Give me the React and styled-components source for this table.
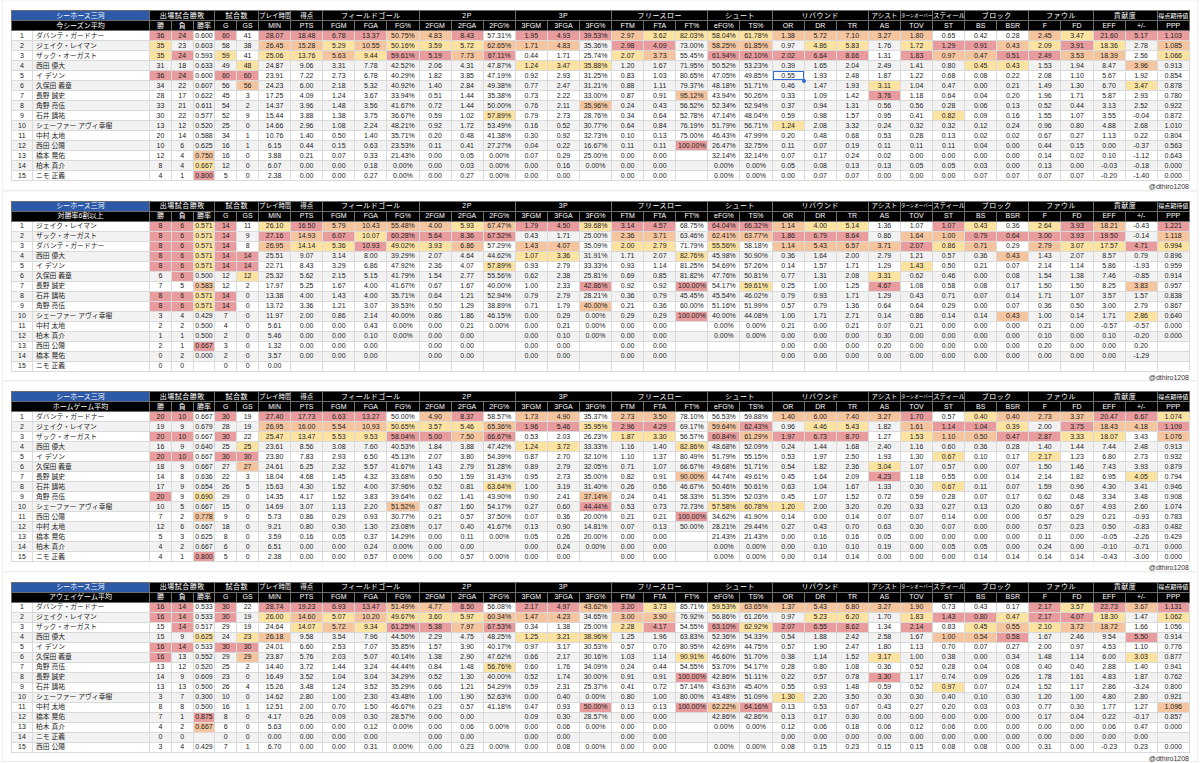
import styled, { createGlobalStyle } from "styled-components";

const GlobalStyle = createGlobalStyle`
  html, body {
    margin: 0;
    padding: 0;
    background: #ffffff;
  }
  body {
    font-family: "Liberation Sans", "Noto Sans CJK JP", sans-serif;
    color: #222;
  }
`;

const GROUPS = [
  ["出場試合勝敗", 3],
  ["試合数", 2],
  ["プレイ時間", 1],
  ["得点", 1],
  ["フィールドゴール", 3],
  ["2P", 3],
  ["3P", 3],
  ["フリースロー", 3],
  ["シュート", 2],
  ["リバウンド", 3],
  ["アシスト", 1],
  ["ターンオーバー", 1, "tiny"],
  ["スティール", 1],
  ["ブロック", 2],
  ["ファウル", 2],
  ["貢献度", 2],
  ["得点期待値", 1, "small"],
];

const COLS = ["勝", "負", "勝率", "G", "GS", "MIN", "PTS", "FGM", "FGA", "FG%", "2FGM", "2FGA", "2FG%", "3FGM", "3FGA", "3FG%", "FTM", "FTA", "FT%", "eFG%", "TS%", "OR", "DR", "TR", "AS", "TOV", "ST", "BS", "BSR", "F", "FD", "EFF", "+/-", "PPP"];

const HEAT = { r: "#e89c9d", o: "#f5c59f", y: "#fce3a2" };

const EMPTY28 = Array(28).fill("-").join(" ");

const TABLES = [
  {
    title: "今シーズン平均",
    selected: [4, 21],
    fix: { "3-28": "y" },
    rows: [
      ["ダバンテ・ガードナー", "36 24 0.600 60 41 28.07 18.48 6.78 13.37 50.75% 4.83 8.43 57.31% 1.95 4.93 39.53% 2.97 3.62 82.03% 58.04% 61.78% 1.38 5.72 7.10 3.27 1.80 0.65 0.42 0.28 2.45 3.47 21.60 5.17 1.103"],
      ["ジェイク・レイマン", "35 23 0.603 58 38 26.45 15.28 5.29 10.55 50.16% 3.59 5.72 62.65% 1.71 4.83 35.36% 2.98 4.09 73.00% 58.25% 61.85% 0.97 4.86 5.83 1.76 1.72 1.29 0.91 0.43 2.09 3.91 18.36 2.78 1.085"],
      ["ザック・オーガスト", "35 24 0.593 59 41 25.06 13.76 5.63 9.44 59.61% 5.19 7.73 67.11% 0.44 1.71 25.74% 2.07 3.73 55.45% 61.94% 62.10% 2.02 6.64 8.66 1.31 1.83 0.97 0.47 0.51 2.49 3.53 18.39 2.56 1.066"],
      ["西田 優大", "31 18 0.633 49 48 24.87 9.06 3.31 7.78 42.52% 2.06 4.31 47.87% 1.24 3.47 35.88% 1.20 1.67 71.95% 50.52% 53.23% 0.39 1.65 2.04 2.49 1.41 0.80 0.45 0.43 1.53 1.94 8.47 3.96 0.913"],
      ["イ デソン", "36 24 0.600 60 60 23.91 7.22 2.73 6.78 40.29% 1.82 3.85 47.19% 0.92 2.93 31.25% 0.83 1.03 80.65% 47.05% 49.85% 0.55 1.93 2.48 1.87 1.22 0.68 0.08 0.22 2.08 1.10 5.67 1.92 0.854"],
      ["久保田 義章", "34 22 0.607 56 56 24.23 6.00 2.18 5.32 40.92% 1.40 2.84 49.38% 0.77 2.47 31.21% 0.88 1.11 79.37% 48.18% 51.71% 0.46 1.47 1.93 3.11 1.04 0.47 0.00 0.21 1.49 1.30 6.70 3.47 0.878"],
      ["長野 誠史", "28 17 0.622 45 3 17.25 4.09 1.24 3.67 33.94% 0.51 1.44 35.38% 0.73 2.22 33.00% 0.87 0.91 95.12% 43.94% 50.26% 0.33 1.09 1.42 3.76 1.18 0.64 0.04 0.20 1.96 1.71 5.87 2.93 0.780"],
      ["角野 亮伍", "33 21 0.611 54 2 14.37 3.96 1.48 3.56 41.67% 0.72 1.44 50.00% 0.76 2.11 35.96% 0.24 0.43 56.52% 52.34% 52.94% 0.37 0.94 1.31 0.56 0.56 0.28 0.06 0.13 0.52 0.44 3.13 2.52 0.922"],
      ["石井 講祐", "30 22 0.577 52 9 15.44 3.88 1.38 3.75 36.67% 0.59 1.02 57.89% 0.79 2.73 28.76% 0.34 0.64 52.78% 47.14% 48.04% 0.59 0.98 1.57 0.95 0.41 0.82 0.09 0.16 1.55 1.07 3.55 -0.04 0.872"],
      ["シェーファー アヴィ幸樹", "13 12 0.520 25 0 14.66 2.96 1.08 2.24 48.21% 0.92 1.72 53.49% 0.16 0.52 30.77% 0.64 0.84 76.19% 51.79% 56.71% 1.24 2.08 3.32 0.24 0.32 0.32 0.12 0.24 0.96 0.80 4.88 2.68 1.010"],
      ["中村 太地", "20 14 0.588 34 1 10.76 1.40 0.50 1.40 35.71% 0.20 0.48 41.38% 0.30 0.92 32.73% 0.10 0.13 75.00% 46.43% 47.99% 0.20 0.48 0.68 0.53 0.28 0.13 0.02 0.02 0.67 0.27 1.13 0.22 0.804"],
      ["西田 公陽", "10 6 0.625 16 1 6.15 0.44 0.15 0.63 23.53% 0.11 0.41 27.27% 0.04 0.22 16.67% 0.11 0.11 100.00% 26.47% 32.75% 0.11 0.07 0.19 0.11 0.11 0.11 0.04 0.00 0.44 0.15 0.00 -0.37 0.563"],
      ["橋本 晃佑", "12 4 0.750 16 0 3.88 0.21 0.07 0.33 21.43% 0.00 0.05 0.00% 0.07 0.29 25.00% 0.00 0.00 - 32.14% 32.14% 0.07 0.17 0.24 0.02 0.00 0.00 0.00 0.00 0.14 0.02 0.10 -1.12 0.643"],
      ["柏木 真介", "8 4 0.667 12 0 6.07 0.00 0.00 0.18 0.00% 0.00 0.03 0.00% 0.00 0.16 0.00% 0.00 0.00 - 0.00% 0.00% 0.05 0.08 0.13 0.13 0.05 0.05 0.03 0.00 0.13 0.00 -0.03 -0.18 0.000"],
      ["ニモ 正義", "4 1 0.800 5 0 2.38 0.00 0.00 0.27 0.00% 0.00 0.27 0.00% 0.00 0.00 - 0.00 0.00 - 0.00% 0.00% 0.00 0.07 0.07 0.00 0.00 0.00 0.07 0.07 0.07 0.07 -0.20 -1.40 0.000"],
    ],
  },
  {
    title: "対勝率6割以上",
    fix: {},
    rows: [
      ["ジェイク・レイマン", "8 6 0.571 14 11 26.10 16.50 5.79 10.43 55.48% 4.00 5.93 67.47% 1.79 4.50 39.68% 3.14 4.57 68.75% 64.04% 66.32% 1.14 4.00 5.14 1.36 1.07 1.07 0.43 0.36 2.64 3.93 18.21 -0.43 1.221"],
      ["ザック・オーガスト", "8 6 0.571 14 9 27.16 14.93 6.07 10.07 60.28% 5.64 8.36 67.52% 0.43 1.71 25.00% 2.36 3.71 63.46% 62.41% 63.77% 1.86 6.79 8.64 0.86 1.64 1.00 0.79 0.64 3.00 3.93 19.50 -0.14 1.118"],
      ["ダバンテ・ガードナー", "8 6 0.571 14 8 26.95 14.14 5.36 10.93 49.02% 3.93 6.86 57.29% 1.43 4.07 35.09% 2.00 2.79 71.79% 55.56% 58.18% 1.14 5.43 6.57 3.71 2.07 0.86 0.71 0.29 2.79 3.07 17.57 4.71 0.994"],
      ["西田 優大", "8 6 0.571 14 14 25.51 9.07 3.14 8.00 39.29% 2.07 4.64 44.62% 1.07 3.36 31.91% 1.71 2.07 82.76% 45.98% 50.90% 0.36 1.64 2.00 2.79 1.21 0.57 0.36 0.43 1.43 2.07 8.57 0.79 0.896"],
      ["イ デソン", "8 6 0.571 14 14 22.71 8.43 3.29 6.86 47.92% 2.36 4.07 57.89% 0.93 2.79 33.33% 0.93 1.14 81.25% 54.69% 57.26% 0.14 1.57 1.71 1.29 1.43 0.50 0.21 0.07 2.14 1.14 5.86 -1.93 0.959"],
      ["久保田 義章", "6 6 0.500 12 12 25.32 5.62 2.15 5.15 41.79% 1.54 2.77 55.56% 0.62 2.38 25.81% 0.69 0.85 81.82% 47.76% 50.81% 0.77 1.31 2.08 3.31 0.62 0.46 0.00 0.08 1.54 1.38 7.46 -0.85 0.914"],
      ["長野 誠史", "7 5 0.583 12 2 17.97 5.25 1.67 4.00 41.67% 0.67 1.67 40.00% 1.00 2.33 42.86% 0.92 0.92 100.00% 54.17% 59.61% 0.25 1.00 1.25 4.67 1.08 0.58 0.08 0.17 1.50 1.50 8.25 3.83 0.957"],
      ["石井 講祐", "8 6 0.571 14 0 13.38 4.00 1.43 4.00 35.71% 0.64 1.21 52.94% 0.79 2.79 28.21% 0.36 0.79 45.45% 45.54% 46.02% 0.79 0.93 1.71 1.29 0.43 0.71 0.07 0.14 1.71 1.07 3.57 1.57 0.838"],
      ["角野 亮伍", "8 6 0.571 14 0 13.72 3.36 1.21 3.07 39.53% 0.50 1.29 38.89% 0.71 1.79 40.00% 0.21 0.36 60.00% 51.16% 51.99% 0.57 0.79 1.36 0.64 0.64 0.29 0.00 0.07 0.36 0.50 3.00 2.79 0.867"],
      ["シェーファー アヴィ幸樹", "3 4 0.429 7 0 11.97 2.00 0.86 2.14 40.00% 0.86 1.86 46.15% 0.00 0.29 0.00% 0.29 0.29 100.00% 40.00% 44.08% 1.00 1.71 2.71 0.14 0.86 0.14 0.14 0.43 1.00 0.14 1.71 2.86 0.640"],
      ["中村 太地", "2 2 0.500 4 0 5.61 0.00 0.00 0.43 0.00% 0.00 0.21 0.00% 0.00 0.21 0.00% 0.00 0.00 - 0.00% 0.00% 0.21 0.00 0.21 0.07 0.21 0.00 0.00 0.00 0.21 0.00 -0.57 -0.57 0.000"],
      ["柏木 真介", "1 1 0.500 2 0 5.46 0.00 0.00 0.10 0.00% 0.00 0.00 - 0.00 0.10 0.00% 0.00 0.00 - 0.00% 0.00% 0.00 0.00 0.00 0.30 0.00 0.00 0.00 0.00 0.10 0.00 0.10 -0.20 0.000"],
      ["西田 公陽", "2 1 0.667 3 0 1.32 0.00 0.00 0.00 - 0.00 0.00 - 0.00 0.00 - 0.00 0.00 - - - 0.00 0.00 0.00 0.20 0.00 0.00 0.00 0.00 0.20 0.00 0.00 0.20 -"],
      ["橋本 晃佑", "0 2 0.000 2 0 3.57 0.00 0.00 0.00 - 0.00 0.00 - 0.00 0.00 - 0.00 0.00 - - - 0.00 0.00 0.00 0.00 0.00 0.00 0.00 0.00 0.00 0.00 0.00 -1.29 -"],
      ["ニモ 正義", "0 0 - 0 0 0.00 " + EMPTY28],
    ],
  },
  {
    title: "ホームゲーム平均",
    fix: { "9-33": "n" },
    rows: [
      ["ダバンテ・ガードナー", "20 10 0.667 30 19 27.40 17.73 6.63 13.27 50.00% 4.90 8.37 58.57% 1.73 4.90 35.37% 2.73 3.50 78.10% 56.53% 59.88% 1.40 6.00 7.40 3.27 1.70 0.57 0.40 0.40 2.73 3.37 20.47 6.67 1.074"],
      ["ジェイク・レイマン", "19 9 0.679 28 19 26.95 16.00 5.54 10.93 50.65% 3.57 5.46 65.36% 1.96 5.46 35.95% 2.96 4.29 69.17% 59.64% 62.43% 0.96 4.46 5.43 1.82 1.61 1.14 1.04 0.39 2.00 3.75 18.43 4.18 1.109"],
      ["ザック・オーガスト", "20 10 0.667 30 22 25.47 13.47 5.53 9.53 58.04% 5.00 7.50 66.67% 0.53 2.03 26.23% 1.87 3.30 56.57% 60.84% 61.29% 1.97 6.73 8.70 1.27 1.53 1.10 0.50 0.47 2.87 3.33 18.07 3.43 1.076"],
      ["西田 優大", "16 9 0.640 25 25 23.61 8.56 3.08 7.60 40.53% 1.84 3.88 47.42% 1.24 3.72 33.33% 1.16 1.40 82.86% 48.68% 52.09% 0.24 1.44 1.68 2.40 1.16 0.60 0.36 0.28 1.40 1.44 7.44 2.48 0.913"],
      ["イ デソン", "20 10 0.667 30 30 23.80 7.83 2.93 6.50 45.13% 2.07 3.80 54.39% 0.87 2.70 32.10% 1.10 1.37 80.49% 51.79% 55.15% 0.53 1.97 2.50 1.93 1.30 0.67 0.10 0.17 2.17 1.23 6.80 2.73 0.932"],
      ["久保田 義章", "18 9 0.667 27 27 24.61 6.25 2.32 5.57 41.67% 1.43 2.79 51.28% 0.89 2.79 32.05% 0.71 1.07 66.67% 49.68% 51.71% 0.54 1.82 2.36 3.04 1.07 0.57 0.00 0.07 1.50 1.46 7.43 3.93 0.879"],
      ["長野 誠史", "14 8 0.636 22 3 18.04 4.68 1.45 4.32 33.68% 0.50 1.59 31.43% 0.95 2.73 35.00% 0.82 0.91 90.00% 44.74% 49.61% 0.45 1.64 2.09 4.23 1.18 0.55 0.00 0.14 2.14 1.82 6.95 4.05 0.794"],
      ["石井 講祐", "17 9 0.654 26 5 15.63 4.30 1.52 4.00 37.96% 0.52 0.81 63.64% 1.00 3.19 31.40% 0.26 0.56 46.67% 50.46% 50.61% 0.63 1.04 1.67 1.33 0.30 0.67 0.11 0.07 1.59 0.96 4.30 3.41 0.946"],
      ["角野 亮伍", "20 9 0.690 29 0 14.35 4.17 1.52 3.83 39.64% 0.62 1.41 43.90% 0.90 2.41 37.14% 0.24 0.41 58.33% 51.35% 52.03% 0.45 1.07 1.52 0.72 0.59 0.28 0.07 0.17 0.62 0.48 3.34 3.48 0.908"],
      ["シェーファー アヴィ幸樹", "10 5 0.667 15 0 14.69 3.07 1.13 2.20 51.52% 0.87 1.60 54.17% 0.27 0.60 44.44% 0.53 0.73 72.73% 57.58% 60.78% 1.20 2.00 3.20 0.20 0.33 0.27 0.13 0.20 0.80 0.67 4.93 2.60 1.074"],
      ["西田 公陽", "7 2 0.778 9 0 5.73 0.86 0.29 0.93 30.77% 0.21 0.57 37.50% 0.07 0.36 20.00% 0.21 0.21 100.00% 34.62% 41.90% 0.14 0.00 0.14 0.07 0.07 0.14 0.00 0.00 0.57 0.29 0.21 -0.93 0.783"],
      ["中村 太地", "12 6 0.667 18 0 9.21 0.80 0.30 1.30 23.08% 0.17 0.40 41.67% 0.13 0.90 14.81% 0.07 0.13 50.00% 28.21% 29.44% 0.27 0.43 0.70 0.63 0.30 0.07 0.00 0.00 0.57 0.23 0.50 -0.83 0.482"],
      ["橋本 晃佑", "5 3 0.625 8 0 3.59 0.16 0.05 0.37 14.29% 0.00 0.11 0.00% 0.05 0.26 20.00% 0.00 0.00 - 21.43% 21.43% 0.00 0.16 0.16 0.05 0.00 0.00 0.00 0.00 0.11 0.00 -0.05 -2.26 0.429"],
      ["柏木 真介", "4 2 0.667 6 0 6.51 0.00 0.00 0.24 0.00% 0.00 0.00 - 0.00 0.24 0.00% 0.00 0.00 - 0.00% 0.00% 0.00 0.10 0.10 0.19 0.00 0.05 0.05 0.00 0.24 0.00 -0.10 -0.71 0.000"],
      ["ニモ 正義", "4 1 0.800 5 0 2.38 0.00 0.00 0.57 0.00% 0.00 0.57 0.00% 0.00 0.00 - 0.00 0.00 - 0.00% 0.00% 0.00 0.14 0.14 0.00 0.00 0.00 0.14 0.14 0.14 0.14 -0.43 -3.00 0.000"],
    ],
  },
  {
    title: "アウェイゲーム平均",
    fix: {},
    rows: [
      ["ダバンテ・ガードナー", "16 14 0.533 30 22 28.74 19.23 6.93 13.47 51.49% 4.77 8.50 56.08% 2.17 4.97 43.62% 3.20 3.73 85.71% 59.53% 63.65% 1.37 5.43 6.80 3.27 1.90 0.73 0.43 0.17 2.17 3.57 22.73 3.67 1.131"],
      ["ジェイク・レイマン", "16 14 0.533 30 19 26.00 14.60 5.07 10.20 49.67% 3.60 5.97 60.34% 1.47 4.23 34.65% 3.00 3.90 76.92% 56.86% 61.26% 0.97 5.23 6.20 1.70 1.83 1.43 0.80 0.47 2.17 4.07 18.30 1.47 1.062"],
      ["ザック・オーガスト", "15 14 0.517 29 19 24.64 14.07 5.72 9.34 61.25% 5.38 7.97 67.53% 0.34 1.38 25.00% 2.28 4.17 54.55% 63.10% 62.92% 2.07 6.55 8.62 1.34 2.14 0.83 0.45 0.55 2.10 3.72 18.72 1.66 1.056"],
      ["西田 優大", "15 9 0.625 24 23 26.18 9.58 3.54 7.96 44.50% 2.29 4.75 48.25% 1.25 3.21 38.96% 1.25 1.96 63.83% 52.36% 54.33% 0.54 1.88 2.42 2.58 1.67 1.00 0.54 0.58 1.67 2.46 9.54 5.50 0.914"],
      ["イ デソン", "16 14 0.533 30 30 24.01 6.60 2.53 7.07 35.85% 1.57 3.90 40.17% 0.97 3.17 30.53% 0.57 0.70 80.95% 42.69% 44.75% 0.57 1.90 2.47 1.80 1.13 0.70 0.07 0.27 2.00 0.97 4.53 1.10 0.776"],
      ["久保田 義章", "16 13 0.552 29 29 23.87 5.76 2.03 5.07 40.14% 1.38 2.90 47.62% 0.66 2.17 30.16% 1.03 1.14 90.91% 46.60% 51.70% 0.38 1.14 1.52 3.17 1.00 0.38 0.00 0.34 1.48 1.14 6.00 3.03 0.877"],
      ["角野 亮伍", "13 12 0.520 25 2 14.40 3.72 1.44 3.24 44.44% 0.84 1.48 56.76% 0.60 1.76 34.09% 0.24 0.44 54.55% 53.70% 54.17% 0.28 0.80 1.08 0.36 0.52 0.28 0.04 0.08 0.40 0.40 2.88 1.40 0.941"],
      ["長野 誠史", "14 9 0.609 23 0 16.49 3.52 1.04 3.04 34.29% 0.52 1.30 40.00% 0.52 1.74 30.00% 0.91 0.91 100.00% 42.86% 51.11% 0.22 0.57 0.78 3.30 1.17 0.74 0.09 0.26 1.78 1.61 4.83 1.87 0.762"],
      ["石井 講祐", "13 13 0.500 26 4 15.26 3.48 1.24 3.52 35.29% 0.66 1.21 54.29% 0.59 2.31 25.37% 0.41 0.72 57.14% 43.63% 45.40% 0.55 0.93 1.48 0.59 0.52 0.97 0.07 0.24 1.52 1.17 2.86 -3.24 0.800"],
      ["シェーファー アヴィ幸樹", "3 7 0.300 10 0 14.62 2.80 1.00 2.30 43.48% 1.00 1.90 52.63% 0.00 0.40 0.00% 0.80 1.00 80.00% 43.48% 51.09% 1.30 2.20 3.50 0.30 0.30 0.40 0.10 0.30 1.20 1.00 4.80 2.80 0.921"],
      ["中村 太地", "8 8 0.500 16 1 12.51 2.00 0.70 1.50 46.67% 0.23 0.57 41.18% 0.47 0.93 50.00% 0.13 0.13 100.00% 62.22% 64.16% 0.13 0.53 0.67 0.43 0.27 0.20 0.03 0.03 0.77 0.30 1.77 1.27 1.096"],
      ["橋本 晃佑", "7 1 0.875 8 0 4.17 0.26 0.09 0.30 28.57% 0.00 0.00 - 0.09 0.30 28.57% 0.00 0.00 - 42.86% 42.86% 0.13 0.17 0.30 0.00 0.00 0.00 0.00 0.00 0.17 0.04 0.22 -0.17 0.857"],
      ["柏木 真介", "4 2 0.667 6 0 5.63 0.00 0.00 0.12 0.00% 0.00 0.06 0.00% 0.00 0.06 0.00% 0.00 0.00 - 0.00% 0.00% 0.12 0.06 0.18 0.06 0.12 0.06 0.00 0.00 0.00 0.00 0.06 0.47 0.000"],
      ["ニモ 正義", "0 0 - 0 0 0.00 0.00 0.00 0.00 - 0.00 0.00 - 0.00 0.00 - 0.00 0.00 - - - 0.00 0.00 0.00 0.00 0.00 0.00 0.00 0.00 0.00 0.00 0.00 0.00 -"],
      ["西田 公陽", "3 4 0.429 7 1 6.70 0.00 0.00 0.31 0.00% 0.00 0.23 0.00% 0.00 0.08 0.00% 0.00 0.00 - 0.00% 0.00% 0.08 0.15 0.23 0.15 0.15 0.08 0.08 0.00 0.31 0.00 -0.23 0.23 0.000"],
    ],
  },
];

// top three of every column get red / orange / yellow, ties share a rank
function heatColors(values, fix) {
  const cols = values[0].length;
  const out = values.map(() => Array(cols).fill(null));
  for (let c = 0; c < cols; c++) {
    const nums = values.map((r) => (r[c] === "-" ? null : parseFloat(r[c])));
    nums.forEach((n, i) => {
      if (n === null) return;
      const rank = 1 + nums.filter((x) => x !== null && x > n).length;
      if (rank <= 3) out[i][c] = ["r", "o", "y"][rank - 1];
    });
  }
  Object.entries(fix || {}).forEach(([key, val]) => {
    const [r, c] = key.split("-").map(Number);
    out[r][c] = val === "n" ? null : val;
  });
  return out;
}

const Page = styled.div`
  width: 1200px;
  padding: 0 2px;
  box-sizing: border-box;
`;

const Section = styled.section`
  height: 190.5px;
  box-sizing: border-box;
  padding: 9px 8px 0 8px;
  border: 1px solid #ededed;
  border-top-color: #f6f6f6;
`;

const Sheet = styled.table`
  width: 1178px;
  table-layout: fixed;
  border-collapse: collapse;
  font-size: 7px;
`;

const HeadRow = styled.tr`
  height: 10px;
  background: #000;
`;

const TeamCell = styled.th`
  padding: 0;
  background: #2c59a8;
  color: #fff;
  font-weight: normal;
  font-size: 7px;
  line-height: 8px;
  border: 1px solid #6d6d6d;
  text-align: center;
`;

const GroupCell = styled.th`
  padding: 0;
  color: #fff;
  font-weight: normal;
  font-size: ${(p) => (p.$size === "tiny" ? "4.5px" : p.$size === "small" ? "6px" : p.$wide ? "7px" : "6.5px")};
  letter-spacing: ${(p) => (p.$wide ? "0.5px" : "0")};
  line-height: 8px;
  white-space: nowrap;
  overflow: hidden;
  border: 1px solid #6d6d6d;
  text-align: center;
`;

const LabelCell = styled.th`
  padding: 0;
  color: #fff;
  font-weight: normal;
  font-size: 7px;
  line-height: 8px;
  white-space: nowrap;
  border: 1px solid #6d6d6d;
  text-align: center;
`;

const Row = styled.tr`
  height: 10px;
  background: ${(p) => (p.$even ? "#f2f2f2" : "#ffffff")};
`;

const RankCell = styled.td`
  padding: 0;
  line-height: 8px;
  text-align: center;
  border: 1px solid #dadada;
`;

const NameCell = styled.td`
  padding: 0 0 0 3px;
  line-height: 8px;
  font-size: 6.8px;
  text-align: left;
  white-space: nowrap;
  overflow: hidden;
  border: 1px solid #dadada;
`;

const NumCell = styled.td`
  position: relative;
  padding: 0;
  line-height: 8px;
  text-align: center;
  white-space: nowrap;
  border: 1px solid #dadada;
  background: ${(p) => (p.$heat ? HEAT[p.$heat] : "transparent")};
  box-shadow: ${(p) => (p.$selected ? "inset 0 0 0 1px #2e6fd4" : "none")};

  &::after {
    content: "";
    display: ${(p) => (p.$selected ? "block" : "none")};
    position: absolute;
    right: -2.5px;
    bottom: -2.5px;
    width: 4px;
    height: 4px;
    border-radius: 50%;
    background: #2e6fd4;
  }
`;

const Credit = styled.div`
  height: 10px;
  line-height: 10px;
  margin-top: 1px;
  font-size: 7px;
  color: #333;
  text-align: right;
`;

function StatTable({ table }) {
  const values = table.rows.map(([, line]) => line.split(" "));
  const colors = heatColors(values, table.fix);
  return (
    <Section>
      <Sheet>
        <colgroup>
          <col style={{ width: 21 }} />
          <col style={{ width: 117 }} />
          {COLS.map((c, i) => (
            <col key={c} style={{ width: i < 5 ? 21.8 : 32.1 }} />
          ))}
        </colgroup>
        <thead>
          <HeadRow>
            <TeamCell colSpan={2}>シーホース三河</TeamCell>
            {GROUPS.map(([label, span, size]) => (
              <GroupCell key={label} colSpan={span} $size={size} $wide={span > 1}>
                {label}
              </GroupCell>
            ))}
          </HeadRow>
          <HeadRow>
            <LabelCell colSpan={2}>{table.title}</LabelCell>
            {COLS.map((c) => (
              <LabelCell key={c}>{c}</LabelCell>
            ))}
          </HeadRow>
        </thead>
        <tbody>
          {table.rows.map(([name], r) => (
            <Row key={r} $even={r % 2 === 1}>
              <RankCell>{r + 1}</RankCell>
              <NameCell>{name}</NameCell>
              {values[r].map((v, c) => (
                <NumCell
                  key={c}
                  $heat={colors[r][c]}
                  $selected={table.selected && table.selected[0] === r && table.selected[1] === c}
                >
                  {v === "-" ? "" : v}
                </NumCell>
              ))}
            </Row>
          ))}
        </tbody>
      </Sheet>
      <Credit>@dthiro1208</Credit>
    </Section>
  );
}

export default function App() {
  return (
    <>
      <GlobalStyle />
      <Page>
        {TABLES.map((t) => (
          <StatTable key={t.title} table={t} />
        ))}
      </Page>
    </>
  );
}
